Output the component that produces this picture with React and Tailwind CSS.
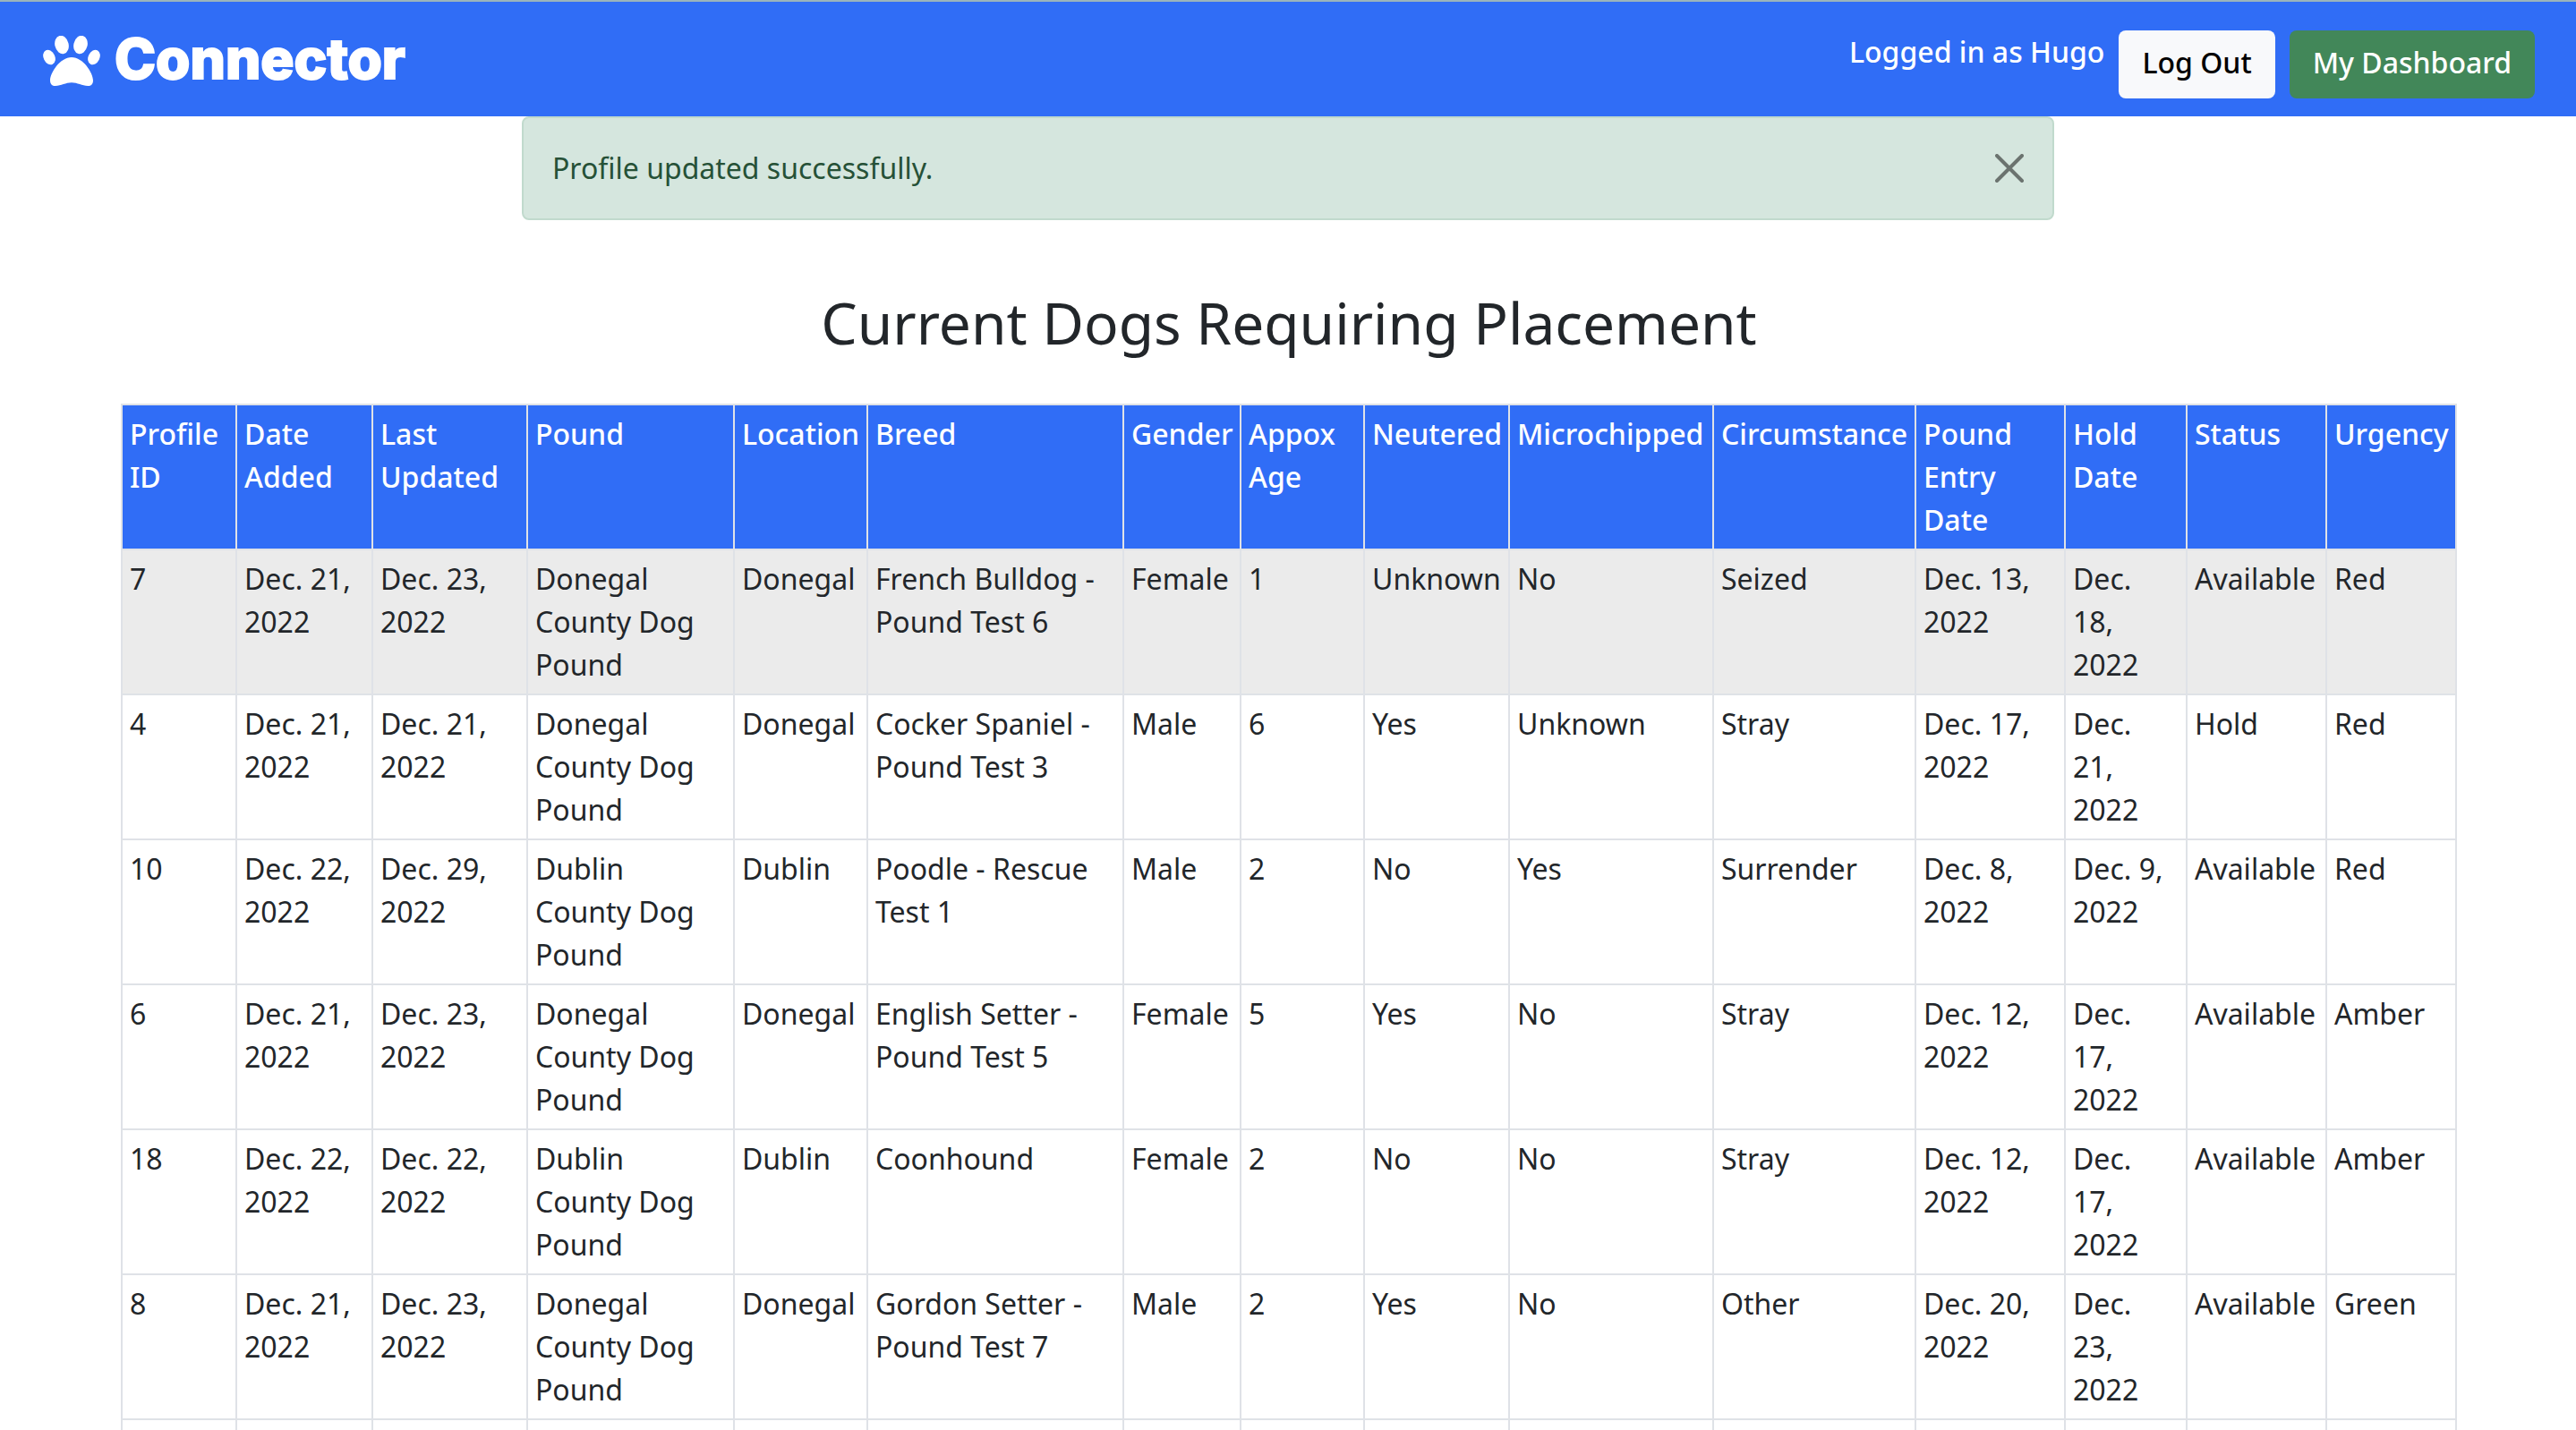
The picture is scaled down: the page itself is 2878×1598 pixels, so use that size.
const columns = [
  { label: "Profile ID", width: 128 },
  { label: "Date Added", width: 152 },
  { label: "Last Updated", width: 173 },
  { label: "Pound", width: 231 },
  { label: "Location", width: 149 },
  { label: "Breed", width: 286 },
  { label: "Gender", width: 131 },
  { label: "Appox Age", width: 138 },
  { label: "Neutered", width: 162 },
  { label: "Microchipped", width: 228 },
  { label: "Circumstance", width: 226 },
  { label: "Pound Entry Date", width: 167 },
  { label: "Hold Date", width: 136 },
  { label: "Status", width: 156 },
  { label: "Urgency", width: 145 },
];

const totalWidth = columns.reduce((sum, column) => sum + column.width, 0);

const dogs = [
  ["7", "Dec. 21, 2022", "Dec. 23, 2022", "Donegal County Dog Pound", "Donegal", "French Bulldog - Pound Test 6", "Female", "1", "Unknown", "No", "Seized", "Dec. 13, 2022", "Dec. 18, 2022", "Available", "Red"],
  ["4", "Dec. 21, 2022", "Dec. 21, 2022", "Donegal County Dog Pound", "Donegal", "Cocker Spaniel - Pound Test 3", "Male", "6", "Yes", "Unknown", "Stray", "Dec. 17, 2022", "Dec. 21, 2022", "Hold", "Red"],
  ["10", "Dec. 22, 2022", "Dec. 29, 2022", "Dublin County Dog Pound", "Dublin", "Poodle - Rescue Test 1", "Male", "2", "No", "Yes", "Surrender", "Dec. 8, 2022", "Dec. 9, 2022", "Available", "Red"],
  ["6", "Dec. 21, 2022", "Dec. 23, 2022", "Donegal County Dog Pound", "Donegal", "English Setter - Pound Test 5", "Female", "5", "Yes", "No", "Stray", "Dec. 12, 2022", "Dec. 17, 2022", "Available", "Amber"],
  ["18", "Dec. 22, 2022", "Dec. 22, 2022", "Dublin County Dog Pound", "Dublin", "Coonhound", "Female", "2", "No", "No", "Stray", "Dec. 12, 2022", "Dec. 17, 2022", "Available", "Amber"],
  ["8", "Dec. 21, 2022", "Dec. 23, 2022", "Donegal County Dog Pound", "Donegal", "Gordon Setter - Pound Test 7", "Male", "2", "Yes", "No", "Other", "Dec. 20, 2022", "Dec. 23, 2022", "Available", "Green"],
  Array(15).fill(""),
];

function PawIcon() {
  return (
    <svg viewBox="0 0 192 168" className="h-14 w-16" fill="currentColor" aria-hidden="true">
      <ellipse cx="63" cy="30" rx="23" ry="31" transform="rotate(-14 63 30)" />
      <ellipse cx="126" cy="30" rx="23" ry="31" transform="rotate(14 126 30)" />
      <ellipse cx="21" cy="72" rx="19" ry="26" transform="rotate(-26 21 72)" />
      <ellipse cx="171" cy="72" rx="19" ry="26" transform="rotate(26 171 72)" />
      <path d="M96 72C57 72 24 125 24 149c0 12 6 19 18 19 19 0 34-11 54-11s35 11 54 11c12 0 18-7 18-19 0-24-33-77-72-77Z" />
    </svg>
  );
}

function Header() {
  return (
    <header className="flex items-start justify-between border-t-2 border-[#9bb4bb] bg-[#306df6] pr-[46px] pb-5 pl-12 text-white">
      <a href="#" className="flex items-center gap-4 pt-6">
        <PawIcon />
        <span className="pb-1 font-['Inter',sans-serif] text-[62px] leading-[80px] font-extrabold [stroke-linejoin:round] [-webkit-text-stroke:2px_white]">
          Connector
        </span>
      </a>
      <nav className="flex items-start gap-4 pt-8 font-medium">
        <span>Logged in as Hugo</span>
        <button type="button" className="rounded-lg bg-[#f8f9fb] px-[26px] pt-3 pb-4 text-black">
          Log Out
        </button>
        <a href="#" className="rounded-lg bg-[#428759] px-[26px] pt-3 pb-4">
          My Dashboard
        </a>
      </nav>
    </header>
  );
}

function Alert() {
  return (
    <div
      role="alert"
      className="mx-auto flex max-w-[1712px] items-center justify-between rounded-lg border-2 border-[#c1dacd] bg-[#d5e6de] px-8 py-8 text-[#265137]"
    >
      <p>Profile updated successfully.</p>
      <button type="button" aria-label="Close" className="text-[#6b736f]">
        <svg viewBox="0 0 32 32" className="size-8" stroke="currentColor" strokeWidth="4" strokeLinecap="round">
          <path d="M2 2 30 30M30 2 2 30" />
        </svg>
      </button>
    </div>
  );
}

function DogTable() {
  return (
    <table className="w-full table-fixed border-collapse text-left">
      <colgroup>
        {columns.map((column) => (
          <col key={column.label} style={{ width: `${(column.width / totalWidth) * 100}%` }} />
        ))}
      </colgroup>
      <thead className="bg-[#306df6] text-white">
        <tr>
          {columns.map((column) => (
            <th key={column.label} scope="col" className="border-2 border-[#dfe2e7] p-2 align-top font-medium">
              {column.label}
            </th>
          ))}
        </tr>
      </thead>
      <tbody>
        {dogs.map((dog, row) => (
          <tr key={row} className="first:bg-[#ebebeb]">
            {dog.map((value, cell) => (
              <td key={cell} className="border-2 border-[#dfe2e7] p-2 align-top">
                {value}
              </td>
            ))}
          </tr>
        ))}
      </tbody>
    </table>
  );
}

export default function App() {
  return (
    <div className="min-h-screen bg-white font-['Noto_Sans',sans-serif] text-[32px] leading-[48px] text-[#22262a]">
      <Header />
      <Alert />
      <main className="pr-[133px] pl-[135px]">
        <h1 className="pt-[76px] pb-[52px] text-center text-[64px] leading-[77px]">Current Dogs Requiring Placement</h1>
        <DogTable />
      </main>
    </div>
  );
}
